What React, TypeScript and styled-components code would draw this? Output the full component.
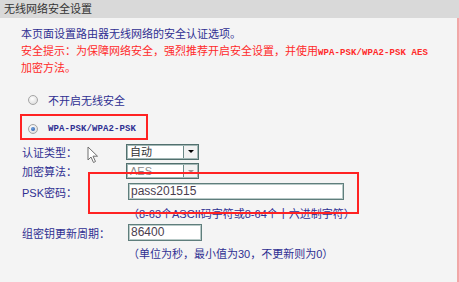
import React from "react";
import styled, { createGlobalStyle } from "styled-components";

const GlobalStyle = createGlobalStyle`
  html, body { margin: 0; padding: 0; background: #f4f4f4; }
  body { font-family: "Liberation Sans", "Noto Sans CJK SC", sans-serif; }
`;

const Page = styled.div`
  position: relative;
  width: 459px;
  height: 282px;
  background: #f4f4f4;
  overflow: hidden;
  display: flex;
  flex-direction: column;
  font-family: "Liberation Sans", "Noto Sans CJK SC", sans-serif;
`;

const Header = styled.div`
  height: 18px;
  flex: none;
  background: #d9d9d9;
  padding-left: 4px;
  font-size: 11px;
  line-height: 18px;
  color: #333;
`;

const Body = styled.div`
  flex: 1;
  border-right: 2px solid #f2a6a6;
  padding: 8px 0 0 21px;
`;

const Line = styled.div<{ $tone: "blue" | "red" }>`
  font-size: 11px;
  line-height: 17px;
  height: 17px;
  white-space: nowrap;
  color: ${(p) => (p.$tone === "red" ? "#ff2a2a" : "#2f2f92")};
`;

const Mono = styled.span`
  font-family: "Liberation Mono", monospace;
  font-size: 9px;
  font-weight: bold;
  letter-spacing: 0.1px;
`;

const RadioRow = styled.div<{ $indent: number; $top: number }>`
  display: flex;
  align-items: center;
  height: 17px;
  gap: 10px;
  padding-left: ${(p) => p.$indent}px;
  margin-top: ${(p) => p.$top}px;
  font-size: 11px;
  color: #2f2f92;
`;

const RadioDot = styled.span<{ $checked?: boolean }>`
  position: relative;
  width: 10px;
  height: 10px;
  box-sizing: border-box;
  border-radius: 50%;
  border: 1px solid #a5a5a5;
  background: radial-gradient(circle at 40% 35%, #ffffff 0%, #e6e6e6 60%, #cfcfcf 100%);
  flex: none;
  &::after {
    content: "";
    display: ${(p) => (p.$checked ? "block" : "none")};
    position: absolute;
    left: 2px;
    top: 2px;
    width: 4px;
    height: 4px;
    border-radius: 50%;
    background: radial-gradient(circle at 40% 35%, #6fa0e0 0%, #1d4f9a 100%);
  }
`;

const HighlightBox = styled.div`
  margin-top: 6px;
  margin-left: -1px;
  width: 128px;
  height: 26px;
  box-sizing: border-box;
  border: 2px solid #f22;
  padding: 4px 0 0 6px;
`;

const Form = styled.div`
  margin-top: 2px;
  padding-left: 1px;
`;

const FormRow = styled.div<{ $h: number }>`
  display: grid;
  grid-template-columns: 105px 1fr;
  align-items: center;
  height: ${(p) => p.$h}px;
`;

const Label = styled.span`
  font-size: 11px;
  color: #2f2f92;
  white-space: nowrap;
`;

const Hint = styled.span`
  grid-column: 2;
  font-size: 11px;
  color: #2f2f92;
  white-space: nowrap;
  margin-left: 1px;
`;

const SelectBox = styled.div<{ $disabled?: boolean }>`
  display: flex;
  width: 73px;
  height: 16px;
  box-sizing: border-box;
  margin-left: -1px;
  border: 1px solid #52706e;
  box-shadow: inset 0 0 0 1px #a3b8b6;
  background: #fff;
  font-size: 11px;
  color: ${(p) => (p.$disabled ? "#8a8a8a" : "#333")};
`;

const SelectText = styled.span`
  flex: 1;
  padding-left: 3px;
  line-height: 14px;
`;

const SelectArrow = styled.span<{ $disabled?: boolean }>`
  width: 14px;
  margin: 1px;
  box-sizing: border-box;
  border-left: 1px solid #6c8a88;
  background: #f2f2f2;
  display: flex;
  align-items: center;
  justify-content: center;
  &::after {
    content: "";
    border-left: 3px solid transparent;
    border-right: 3px solid transparent;
    border-top: 3px solid ${(p) => (p.$disabled ? "#999" : "#000")};
  }
`;

const TextInput = styled.div<{ $w: number }>`
  width: ${(p) => p.$w}px;
  height: 17px;
  box-sizing: border-box;
  margin-left: 1px;
  border: 1px solid #5f7e7c;
  box-shadow: inset 0 0 0 1px #b9cac8;
  background: #fff;
  padding-left: 2px;
  font-size: 12px;
  line-height: 15px;
  color: #4b3d4e;
`;

const Annotation = styled.div`
  position: absolute;
  left: 88px;
  top: 172px;
  width: 271px;
  height: 42px;
  box-sizing: border-box;
  border: 2px solid #f22;
  pointer-events: none;
`;

const Cursor = styled.svg`
  position: absolute;
  left: 87px;
  top: 146px;
`;

export default function App() {
  return (
    <>
      <GlobalStyle />
      <Page>
        <Header>无线网络安全设置</Header>
        <Body>
          <Line $tone="blue">本页面设置路由器无线网络的安全认证选项。</Line>
          <Line $tone="red">
            安全提示：为保障网络安全，强烈推荐开启安全设置，并使用<Mono>WPA-PSK/WPA2-PSK AES</Mono>
          </Line>
          <Line $tone="red">加密方法。</Line>

          <RadioRow $indent={7} $top={14}>
            <RadioDot />
            <span>不开启无线安全</span>
          </RadioRow>
          <HighlightBox>
            <RadioRow $indent={0} $top={0}>
              <RadioDot $checked />
              <Mono>WPA-PSK/WPA2-PSK</Mono>
            </RadioRow>
          </HighlightBox>

          <Form>
            <FormRow $h={19}>
              <Label>认证类型：</Label>
              <SelectBox>
                <SelectText>自动</SelectText>
                <SelectArrow />
              </SelectBox>
            </FormRow>
            <FormRow $h={20}>
              <Label>加密算法：</Label>
              <SelectBox $disabled>
                <SelectText>AES</SelectText>
                <SelectArrow $disabled />
              </SelectBox>
            </FormRow>
            <FormRow $h={21}>
              <Label>PSK密码：</Label>
              <TextInput $w={216}>pass201515</TextInput>
            </FormRow>
            <FormRow $h={22}>
              <Hint>（8-63个ASCII码字符或8-64个十六进制字符）</Hint>
            </FormRow>
            <FormRow $h={17}>
              <Label>组密钥更新周期：</Label>
              <TextInput $w={74}>86400</TextInput>
            </FormRow>
            <FormRow $h={23}>
              <Hint>（单位为秒，最小值为30，不更新则为0）</Hint>
            </FormRow>
          </Form>
        </Body>
        <Annotation />
        <Cursor width="12" height="18" viewBox="0 0 12 18">
          <path
            d="M1 1 L1 14 L4 11 L6.5 16.5 L8.5 15.5 L6 10.2 L10.5 10.2 Z"
            fill="#fff"
            stroke="#6f6f6f"
            strokeWidth="1"
            strokeLinejoin="round"
          />
        </Cursor>
      </Page>
    </>
  );
}
